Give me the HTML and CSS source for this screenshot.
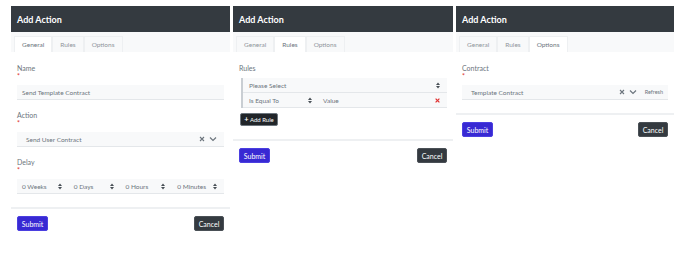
FILE: index.html
```html
<!DOCTYPE html>
<html>
<head>
<meta charset="utf-8">
<link rel="stylesheet" href="styles.css">
</head>
<body>
<div class="cols">
  <!-- Panel 1 -->
  <div class="panel">
    <div class="head">Add Action</div>
    <div class="tabs">
      <span class="tab active">General</span>
      <span class="tab">Rules</span>
      <span class="tab">Options</span>
    </div>
    <div class="body">
      <div class="field">
        <div class="label">Name</div>
        <div class="req">*</div>
        <div class="input">Send Template Contract</div>
      </div>
      <div class="field">
        <div class="label">Action</div>
        <div class="req">*</div>
        <div class="input sel">
          <span class="grow ind">Send User Contract</span>
          <svg class="x" width="6" height="6" viewBox="0 0 6 6"><path d="M1 1L5 5M5 1L1 5" stroke="#6c757d" stroke-width="1.1"/></svg>
          <svg class="chev" width="8" height="6" viewBox="0 0 8 6"><path d="M1 1.5L4 4.5L7 1.5" stroke="#6c757d" stroke-width="1.2" fill="none"/></svg>
        </div>
      </div>
      <div class="field last">
        <div class="label">Delay</div>
        <div class="req">*</div>
        <div class="quad">
          <div class="input sel"><span class="grow">0 Weeks</span><svg class="ud" width="4" height="7" viewBox="0 0 4 7"><path d="M0 3L2 0.5L4 3ZM0 4L2 6.5L4 4Z" fill="#495057"/></svg></div>
          <div class="input sel"><span class="grow">0 Days</span><svg class="ud" width="4" height="7" viewBox="0 0 4 7"><path d="M0 3L2 0.5L4 3ZM0 4L2 6.5L4 4Z" fill="#495057"/></svg></div>
          <div class="input sel"><span class="grow">0 Hours</span><svg class="ud" width="4" height="7" viewBox="0 0 4 7"><path d="M0 3L2 0.5L4 3ZM0 4L2 6.5L4 4Z" fill="#495057"/></svg></div>
          <div class="input sel"><span class="grow">0 Minutes</span><svg class="ud" width="4" height="7" viewBox="0 0 4 7"><path d="M0 3L2 0.5L4 3ZM0 4L2 6.5L4 4Z" fill="#495057"/></svg></div>
        </div>
      </div>
    </div>
    <div class="foot">
      <button class="btn submit">Submit</button>
      <button class="btn cancel">Cancel</button>
    </div>
  </div>

  <!-- Panel 2 -->
  <div class="panel">
    <div class="head">Add Action</div>
    <div class="tabs">
      <span class="tab">General</span>
      <span class="tab active">Rules</span>
      <span class="tab">Options</span>
    </div>
    <div class="body">
      <div class="field last">
        <div class="label">Rules</div>
        <div class="rules">
          <div class="rrow">
            <span class="grow">Please Select</span>
            <svg class="ud" width="4" height="7" viewBox="0 0 4 7"><path d="M0 3L2 0.5L4 3ZM0 4L2 6.5L4 4Z" fill="#495057"/></svg>
          </div>
          <div class="rrow split">
            <div class="cond"><span class="grow">Is Equal To</span><svg class="ud" width="4" height="7" viewBox="0 0 4 7"><path d="M0 3L2 0.5L4 3ZM0 4L2 6.5L4 4Z" fill="#495057"/></svg></div>
            <div class="val"><span class="grow">Value</span><svg class="rx" width="5" height="5" viewBox="0 0 5 5"><path d="M0.6 0.6L4.4 4.4M4.4 0.6L0.6 4.4" stroke="#e03131" stroke-width="1.2"/></svg></div>
          </div>
        </div>
        <button class="btn addrule"><b>+</b> Add Rule</button>
      </div>
    </div>
    <div class="foot">
      <button class="btn submit">Submit</button>
      <button class="btn cancel">Cancel</button>
    </div>
  </div>

  <!-- Panel 3 -->
  <div class="panel">
    <div class="head">Add Action</div>
    <div class="tabs">
      <span class="tab">General</span>
      <span class="tab">Rules</span>
      <span class="tab active">Options</span>
    </div>
    <div class="body">
      <div class="field last">
        <div class="label">Contract</div>
        <div class="req">*</div>
        <div class="input sel">
          <span class="grow ind">Template Contract</span>
          <svg class="x" width="6" height="6" viewBox="0 0 6 6"><path d="M1 1L5 5M5 1L1 5" stroke="#6c757d" stroke-width="1.1"/></svg>
          <svg class="chev" width="8" height="6" viewBox="0 0 8 6"><path d="M1 1.5L4 4.5L7 1.5" stroke="#6c757d" stroke-width="1.2" fill="none"/></svg>
          <span class="refresh">Refresh</span>
        </div>
      </div>
    </div>
    <div class="foot">
      <button class="btn submit">Submit</button>
      <button class="btn cancel">Cancel</button>
    </div>
  </div>
</div>
</body>
</html>
```
FILE: styles.css
```css
* { box-sizing: border-box; }
html, body { margin: 0; padding: 0; background: #fff; }
body {
  font-family: Lato, "Open Sans", "Liberation Sans", sans-serif;
  color: #495057;
  padding: 6px 14px 0 11px;
}
.cols {
  display: grid;
  grid-template-columns: 219px 220px 218px;
  column-gap: 3px;
  align-items: start;
}
.panel { display: flex; flex-direction: column; }
.head {
  height: 26px;
  background: #343a40;
  color: #fff;
  font-weight: 700;
  font-size: 9px;
  display: flex;
  align-items: center;
  padding-left: 6px;
}
.tabs {
  height: 20px;
  background: #f8f9fa;
  display: flex;
  align-items: flex-end;
  padding-left: 3px;
}
.tab {
  height: 16px;
  display: flex;
  align-items: center;
  padding: 0 7px;
  font-size: 6.5px;
  color: #8f959b;
  border: 1px solid #eef0f2;
  border-bottom: none;
}
.tab.active { background: #fff; color: #6c757d; }
.body { padding: 12px 6px 0; }
.field { margin-bottom: 11px; }
.field.last { margin-bottom: 13px; }
.label {
  font-size: 7px;
  line-height: 8px;
  color: #6c757d;
}
.req {
  color: #e03131;
  font-size: 7px;
  line-height: 8px;
  height: 8px;
  margin-bottom: 5px;
}
.input {
  height: 15px;
  background: #f8f9fa;
  border-bottom: 1px solid #e4e7ea;
  font-size: 6.5px;
  color: #6c757d;
  display: flex;
  align-items: center;
  padding: 0 5px;
}
.sel { gap: 3px; }
.grow { flex: 1; }
.ind { padding-left: 4px; }
.x { margin-right: 1px; }
.chev { margin-right: 2px; }
.refresh { font-size: 5.5px; margin-left: 3px; color: #6c757d; }
.quad { display: grid; grid-template-columns: repeat(4, 1fr); }
.quad .ud { margin-right: 2px; }
.rules {
  margin-top: 6px;
  border-left: 2px solid #c9ced3;
  background: #f8f9fa;
  margin-left: 2px;
}
.rrow {
  height: 15px;
  display: flex;
  align-items: center;
  padding: 0 7px 0 6px;
  font-size: 6.5px;
  color: #6c757d;
  border-bottom: 1px solid #e4e7ea;
}
.rrow.split { padding: 0; }
.cond {
  width: 75px;
  display: flex;
  align-items: center;
  padding: 0 6px;
  height: 100%;
}
.val {
  flex: 1;
  display: flex;
  align-items: center;
  padding: 0 7px 0 5px;
  height: 100%;
}
.btn {
  font-family: Lato, "Open Sans", "Liberation Sans", sans-serif;
  border-radius: 2px;
  cursor: pointer;
  padding: 0;
  display: block;
}
.addrule {
  margin-top: 5px;
  margin-left: 1px;
  height: 13px;
  width: 38px;
  background: #212529;
  color: #fff;
  font-size: 6px;
  border: 1px solid #6c757d;
}
.addrule b { font-size: 7.5px; }
.foot {
  border-top: 2px solid #eef0f2;
  display: flex;
  justify-content: space-between;
  padding: 7px 6px 0 6px;
}
.submit {
  height: 15px;
  width: 31px;
  background: #3829d3;
  border: 1px solid #4b3fe0;
  color: #fff;
  font-size: 7px;
}
.cancel {
  height: 15px;
  width: 30px;
  background: #343a40;
  border: 1px solid #4a5056;
  color: #fff;
  font-size: 7px;
}
```
